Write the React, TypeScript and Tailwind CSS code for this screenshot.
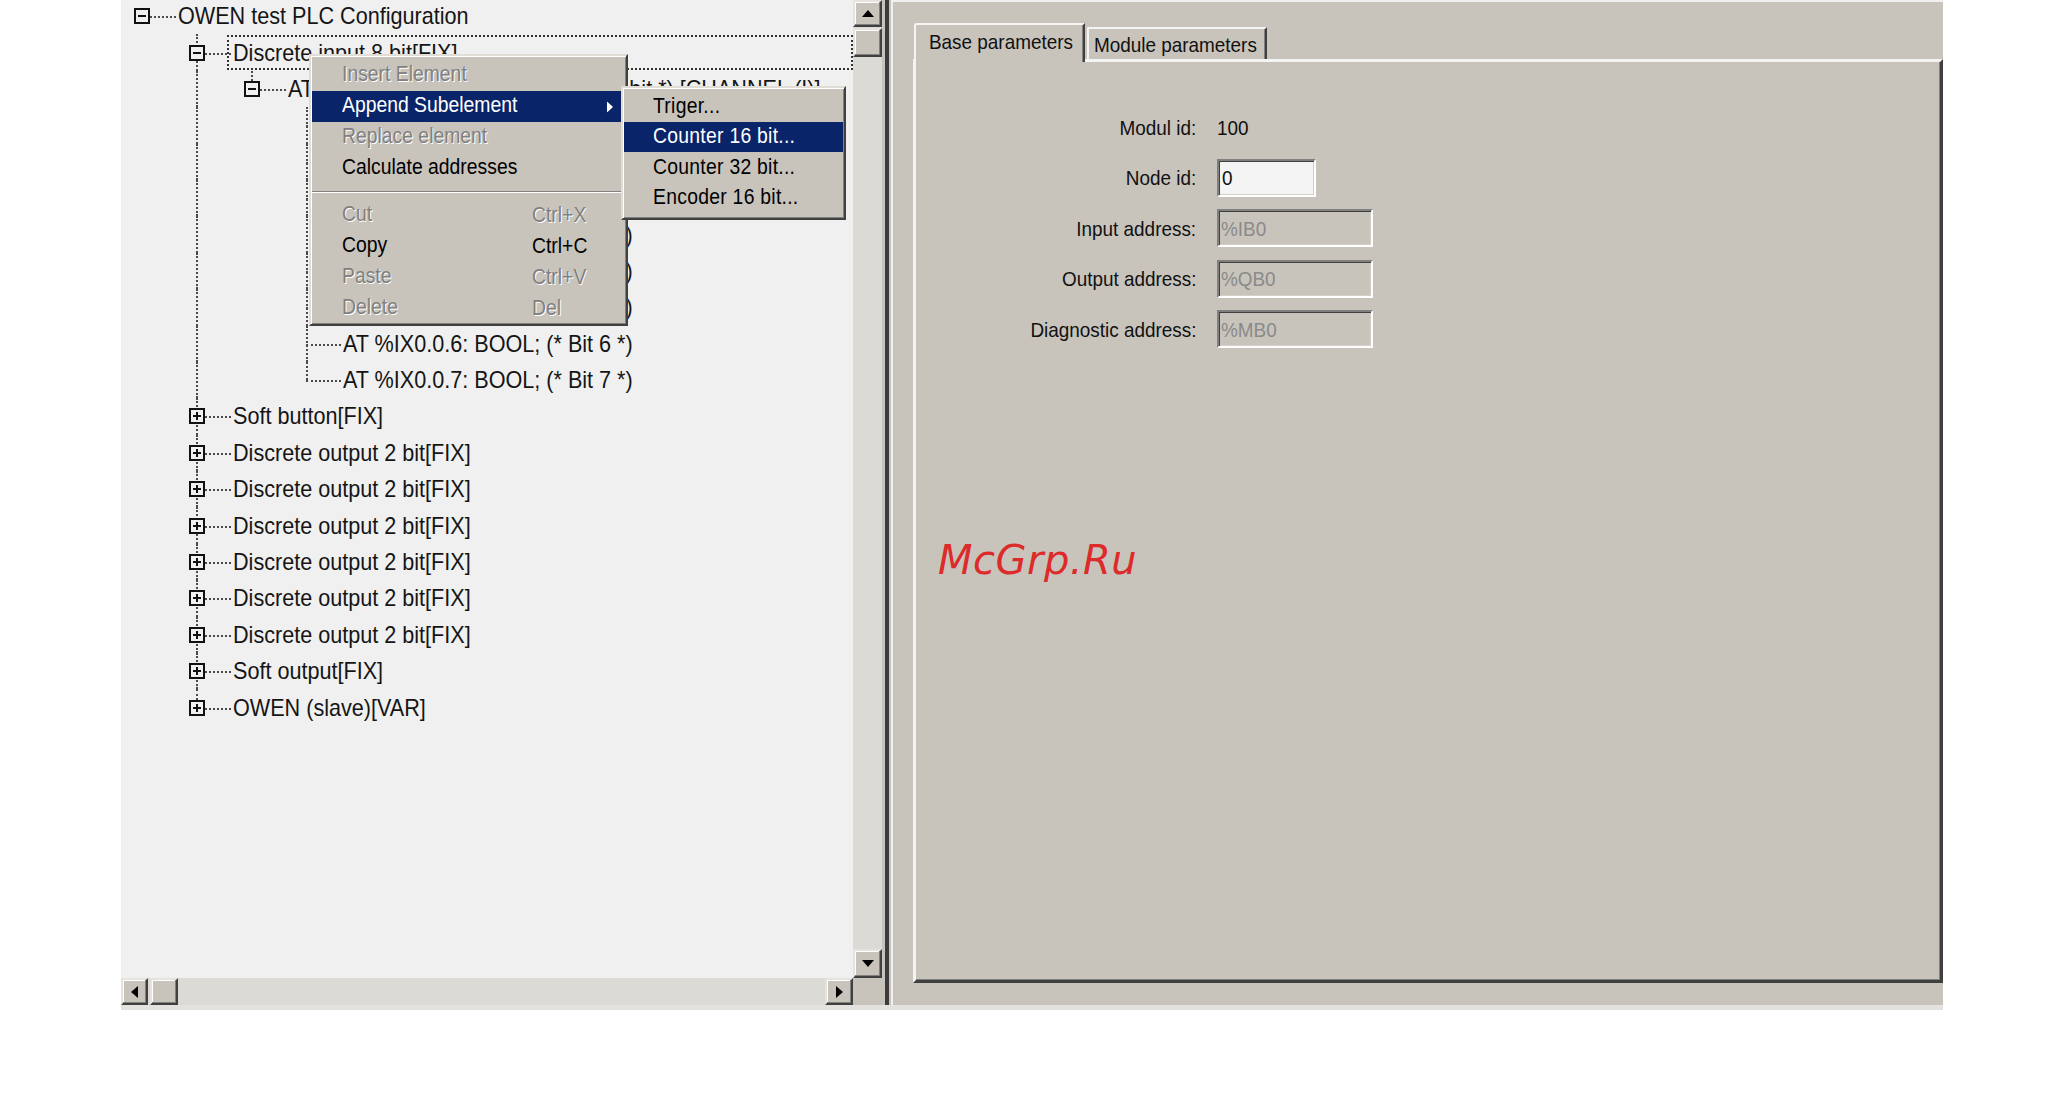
import React from "react";

type Row = {
  level: number;
  text: string;
  box?: "minus" | "plus";
  guides: boolean[];
  last: boolean;
  root?: boolean;
  focus?: boolean;
};

const bits: Row[] = [0, 1, 2, 3, 4, 5, 6, 7].map((n) => ({
  level: 3,
  text: `AT %IX0.0.${n}: BOOL; (* Bit ${n} *)`,
  guides: [false, true, false],
  last: n === 7,
}));

const outputs: Row[] = [1, 2, 3, 4, 5, 6].map(() => ({
  level: 1,
  text: "Discrete output 2 bit[FIX]",
  box: "plus",
  guides: [false],
  last: false,
}));

const rows: Row[] = [
  { level: 0, text: "OWEN test PLC Configuration", box: "minus", guides: [], last: true, root: true },
  { level: 1, text: "Discrete input 8 bit[FIX]", box: "minus", guides: [false], last: false, focus: true },
  {
    level: 2,
    text: "AT %IB0: BYTE; (* Discrete input 8 bit *) [CHANNEL (I)]",
    box: "minus",
    guides: [false, true],
    last: true,
  },
  ...bits,
  { level: 1, text: "Soft button[FIX]", box: "plus", guides: [false], last: false },
  ...outputs,
  { level: 1, text: "Soft output[FIX]", box: "plus", guides: [false], last: false },
  { level: 1, text: "OWEN (slave)[VAR]", box: "plus", guides: [false], last: true },
];

const dot = "border-dotted border-[#4a4a4a]";

const ExpandBox = ({ kind }: { kind: "minus" | "plus" }) => (
  <svg
    className="absolute left-[13px] top-1/2 -translate-y-1/2"
    width="16"
    height="16"
    viewBox="0 0 16 16"
  >
    <rect x="1" y="1" width="14" height="14" fill="#f0f0f0" stroke="#111" strokeWidth="2" />
    <line x1="4" y1="8" x2="12" y2="8" stroke="#111" strokeWidth="2" />
    {kind === "plus" && <line x1="8" y1="4" x2="8" y2="12" stroke="#111" strokeWidth="2" />}
  </svg>
);

const TreeRow = ({ row }: { row: Row }) => (
  <div className="flex h-[36.4px] items-center">
    {row.guides.map((g, i) => (
      <div key={i} className="relative h-full w-[55px] shrink-0">
        {g && <div className={`absolute left-[20px] top-0 bottom-0 border-l-2 ${dot}`} />}
      </div>
    ))}
    <div className="relative h-full w-[55px] shrink-0">
      {!row.root && (
        <div
          className={`absolute left-[20px] top-0 border-l-2 ${dot} ${row.last ? "h-1/2" : "bottom-0"}`}
        />
      )}
      <div className={`absolute left-[20px] right-0 top-1/2 border-t-2 ${dot}`} />
      {row.box && <ExpandBox kind={row.box} />}
    </div>
    <div
      className={`-ml-[4px] flex h-[35px] items-center whitespace-nowrap border-2 px-[4px] ${
        row.focus ? "flex-1 border-dotted border-[#333]" : "border-transparent"
      }`}
    >
      <span className="inline-block origin-left scale-x-90 text-[24px] leading-none text-[#151515]">
        {row.text}
      </span>
    </div>
  </div>
);

const raised =
  "border-2 border-t-[#e6e3de] border-l-[#e6e3de] border-r-[#404040] border-b-[#404040] bg-[#c8c4bc] shadow-[inset_-1px_-1px_0_#808080,inset_1px_1px_0_#ffffff]";

const Arrow = ({ dir }: { dir: "up" | "down" | "left" | "right" }) => {
  const pts = {
    up: "6,0 12,7 0,7",
    down: "0,0 12,0 6,7",
    left: "7,0 7,12 0,6",
    right: "0,0 7,6 0,12",
  }[dir];
  const vertical = dir === "up" || dir === "down";
  return (
    <svg width={vertical ? 12 : 7} height={vertical ? 7 : 12} viewBox={vertical ? "0 0 12 7" : "0 0 7 12"}>
      <polygon points={pts} fill="#000" />
    </svg>
  );
};

const disabled = "text-[#808080] [text-shadow:1px_1px_0_#ffffff]";

const MenuItem = ({
  label,
  shortcut,
  off,
  active,
  sub,
}: {
  label: string;
  shortcut?: string;
  off?: boolean;
  active?: boolean;
  sub?: boolean;
}) => (
  <div
    className={`relative mx-[1px] flex h-[31px] items-center pl-[30px] ${
      active ? "bg-[#0a246a] text-white" : off ? disabled : "text-black"
    }`}
  >
    <span className="w-[190px] whitespace-nowrap">
      <span className="inline-block origin-left scale-x-90 text-[21.5px] leading-none">{label}</span>
    </span>
    {shortcut && (
      <span className="inline-block origin-left scale-x-90 whitespace-nowrap text-[21.5px] leading-none">
        {shortcut}
      </span>
    )}
    {sub && (
      <svg className="absolute right-[12px] top-1/2 -translate-y-1/2" width="6" height="11" viewBox="0 0 6 11">
        <polygon points="0,0 6,5.5 0,11" fill={active ? "#fff" : "#000"} />
      </svg>
    )}
  </div>
);

const SubItem = ({ label, active }: { label: string; active?: boolean }) => (
  <div
    className={`mx-[1px] flex h-[30.5px] items-center pl-[29px] ${
      active ? "bg-[#0a246a] text-white" : "text-black"
    }`}
  >
    <span className="inline-block origin-left scale-x-90 whitespace-nowrap text-[21.5px] leading-none tracking-[0.3px]">
      {label}
    </span>
  </div>
);

const sunken =
  "border-2 border-t-[#808080] border-l-[#808080] border-r-[#ffffff] border-b-[#ffffff] shadow-[inset_1px_1px_0_#404040,inset_-1px_-1px_0_#d4d0c8]";

const Label = ({ children }: { children: React.ReactNode }) => (
  <div className="flex h-[38px] items-center justify-end whitespace-nowrap">
    <span className="inline-block origin-right scale-x-90 text-[21px] leading-none text-[#111]">{children}</span>
  </div>
);

const FieldText = ({ children, grey }: { children: React.ReactNode; grey?: boolean }) => (
  <span
    className={`inline-block origin-left scale-x-90 whitespace-nowrap text-[21px] leading-none ${
      grey ? "text-[#8a8a8a]" : "text-[#111]"
    }`}
  >
    {children}
  </span>
);

export default function App() {
  return (
    <div className="relative h-[1119px] w-[2062px] overflow-hidden bg-white font-['Liberation_Sans',Arial,sans-serif]">
      <div className="ml-[121px] flex w-[1822px] flex-col">
        <div className="flex h-[1005px]">
          {/* tree pane */}
          <div className="flex w-[761px] flex-col">
            <div className="flex h-[978px]">
              <div className="h-full w-[732px] overflow-hidden bg-[#f0f0f0]">
                <div className="-mt-[2px]">
                  {rows.map((r, i) => (
                    <TreeRow key={i} row={r} />
                  ))}
                </div>
              </div>
              <div className="flex w-[29px] flex-col bg-[#dcdad5]">
                <div className={`flex h-[27px] items-center justify-center ${raised}`}>
                  <Arrow dir="up" />
                </div>
                <div className={`mt-[1px] h-[29px] ${raised}`} />
                <div className="flex-1" />
                <div className={`flex h-[29px] items-center justify-center ${raised}`}>
                  <Arrow dir="down" />
                </div>
              </div>
            </div>
            <div className="flex h-[27px]">
              <div className="flex w-[732px] bg-[#dcdad5]">
                <div className={`flex w-[27px] items-center justify-center ${raised}`}>
                  <Arrow dir="left" />
                </div>
                <div className={`ml-[2px] w-[28px] ${raised}`} />
                <div className="flex-1" />
                <div className={`flex w-[28px] items-center justify-center ${raised}`}>
                  <Arrow dir="right" />
                </div>
              </div>
              <div className="w-[29px] bg-[#c8c4bc]" />
            </div>
          </div>

          {/* splitter */}
          <div className="w-[3px] bg-[#c8c4bc]" />
          <div className="w-[4px] bg-[#3c3c3c]" />
          <div className="w-[2px] bg-[#c8c4bc]" />

          {/* properties pane */}
          <div className="flex w-[1052px] flex-col border-l-2 border-t-2 border-[#f0f0f0] bg-[#c8c4bc] pl-[20px] pt-[21px]">
            <div className="relative z-10 flex h-[36px] items-end pl-[1px]">
              <div className="-mb-[3px] flex h-[39px] w-[171px] items-center rounded-tl-[3px] border-l-2 border-r-2 border-t-2 border-l-[#f4f4f4] border-r-[#404040] border-t-[#f4f4f4] bg-[#c8c4bc] pb-[5px] pl-[13px] shadow-[inset_-1px_0_0_#808080]">
                <FieldText>Base parameters</FieldText>
              </div>
              <div className="ml-[2px] flex h-[32px] w-[180px] items-center rounded-tl-[2px] border-l-2 border-r-2 border-t-2 border-l-[#f4f4f4] border-r-[#404040] border-t-[#f4f4f4] pl-[5px] shadow-[inset_-1px_0_0_#808080]">
                <FieldText>Module parameters</FieldText>
              </div>
            </div>
            <div className="mb-[22px] flex-1 border-b-[3px] border-l-[3px] border-r-[3px] border-t-[3px] border-b-[#404040] border-l-[#f4f4f4] border-r-[#404040] border-t-[#f4f4f4] pt-[46px] shadow-[inset_-1px_-1px_0_#808080]">
              <div className="grid grid-cols-[280px_auto] justify-start gap-x-[21px] gap-y-[12.5px]">
                <Label>Modul id:</Label>
                <div className="flex h-[38px] items-center">
                  <FieldText>100</FieldText>
                </div>
                <Label>Node id:</Label>
                <div className={`flex h-[38px] w-[99px] items-center bg-[#f4f4f4] pl-[3px] ${sunken}`}>
                  <FieldText>0</FieldText>
                </div>
                <Label>Input address:</Label>
                <div className={`flex h-[38px] w-[156px] items-center pl-[2px] ${sunken}`}>
                  <FieldText grey>%IB0</FieldText>
                </div>
                <Label>Output address:</Label>
                <div className={`flex h-[38px] w-[156px] items-center pl-[2px] ${sunken}`}>
                  <FieldText grey>%QB0</FieldText>
                </div>
                <Label>Diagnostic address:</Label>
                <div className={`flex h-[38px] w-[156px] items-center pl-[2px] ${sunken}`}>
                  <FieldText grey>%MB0</FieldText>
                </div>
              </div>
            </div>
          </div>
        </div>
        <div className="h-[5px] bg-[#e4e2de]" />
      </div>

      {/* context menu */}
      <div className="absolute left-[309px] top-[54px] z-20 h-[272px] w-[319px] border-2 border-b-[#404040] border-l-[#e0ddd7] border-r-[#404040] border-t-[#e0ddd7] bg-[#c8c4bc] pt-[4px] shadow-[inset_1px_1px_0_#ffffff,inset_-1px_-1px_0_#808080]">
        <MenuItem label="Insert Element" off />
        <MenuItem label="Append Subelement" active sub />
        <MenuItem label="Replace element" off />
        <MenuItem label="Calculate addresses" />
        <div className="mx-[1px] my-[7px] h-[2px] border-b border-t border-b-white border-t-[#808080]" />
        <MenuItem label="Cut" shortcut="Ctrl+X" off />
        <MenuItem label="Copy" shortcut="Ctrl+C" />
        <MenuItem label="Paste" shortcut="Ctrl+V" off />
        <MenuItem label="Delete" shortcut="Del" off />
      </div>

      {/* submenu */}
      <div className="absolute left-[621px] top-[86px] z-30 h-[134px] w-[225px] border-2 border-b-[#404040] border-l-[#e0ddd7] border-r-[#404040] border-t-[#e0ddd7] bg-[#c8c4bc] pt-[3px] shadow-[inset_1px_1px_0_#ffffff,inset_-1px_-1px_0_#808080]">
        <SubItem label="Triger..." />
        <SubItem label="Counter 16 bit..." active />
        <SubItem label="Counter 32 bit..." />
        <SubItem label="Encoder 16 bit..." />
      </div>

      {/* watermark */}
      <div className="absolute left-[938px] top-[540px] font-['DejaVu_Sans',sans-serif] text-[40px] italic leading-none tracking-[0.5px] text-[#dd2a2a]">
        McGrp.Ru
      </div>
    </div>
  );
}
